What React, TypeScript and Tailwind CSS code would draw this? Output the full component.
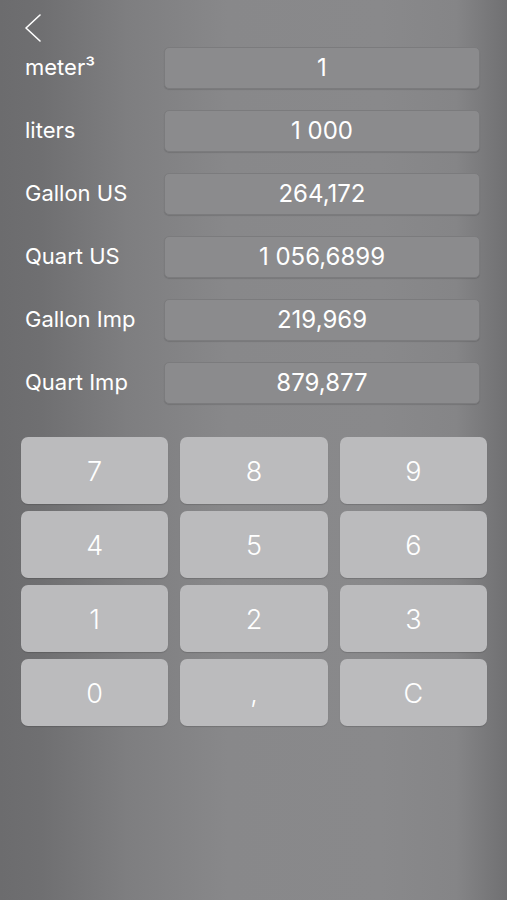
const rows = [
  { label: 'meter³', value: '1' },
  { label: 'liters', value: '1 000' },
  { label: 'Gallon US', value: '264,172' },
  { label: 'Quart US', value: '1 056,6899' },
  { label: 'Gallon Imp', value: '219,969' },
  { label: 'Quart Imp', value: '879,877' },
];

const keys = ['7', '8', '9', '4', '5', '6', '1', '2', '3', '0', ',', 'C'];

export default function App() {
  return (
    <div
      className="w-[507px] h-[900px] overflow-hidden text-white bg-[linear-gradient(90deg,#6c6c6e_0%,#6f6f71_8%,#7e7e80_25%,#88888a_45%,#89898b_75%,#858587_90%,#707072_100%)]"
      style={{ fontFamily: 'Inter, "Noto Sans", sans-serif' }}
    >
      {/* Back */}
      <div className="h-[47px] pl-[24px] pt-[14px]">
        <svg width="18" height="28" viewBox="0 0 18 28" fill="none">
          <path d="M16 1 L2 14 L16 27" stroke="white" strokeWidth="1.6" strokeLinecap="round" strokeLinejoin="round" />
        </svg>
      </div>

      {/* Conversion rows */}
      <div className="flex flex-col gap-[21px] pr-[27px]">
        {rows.map((r) => (
          <div key={r.label} className="flex items-center h-[42px]">
            <div className="w-[164px] pl-[25px] text-[22px] leading-none -mt-[2px]">
              {r.label}
            </div>
            <div className="flex-1 h-[42px] rounded-[5px] bg-[#8b8b8d] border border-[#7b7b7d] shadow-[0_1px_1px_rgba(0,0,0,0.12)] flex items-center justify-center text-[24px]">
              {r.value}
            </div>
          </div>
        ))}
      </div>

      {/* Keypad */}
      <div className="mt-[33px] px-[21px] grid grid-cols-3 gap-x-[12px] gap-y-[7px] pr-[20px]">
        {keys.map((k) => (
          <div
            key={k}
            className="h-[67px] rounded-[7px] bg-[#bbbbbd] shadow-[0_1px_1px_rgba(0,0,0,0.15)] flex items-center justify-center pt-[3px] text-[27px] font-light"
          >
            {k}
          </div>
        ))}
      </div>
    </div>
  );
}
